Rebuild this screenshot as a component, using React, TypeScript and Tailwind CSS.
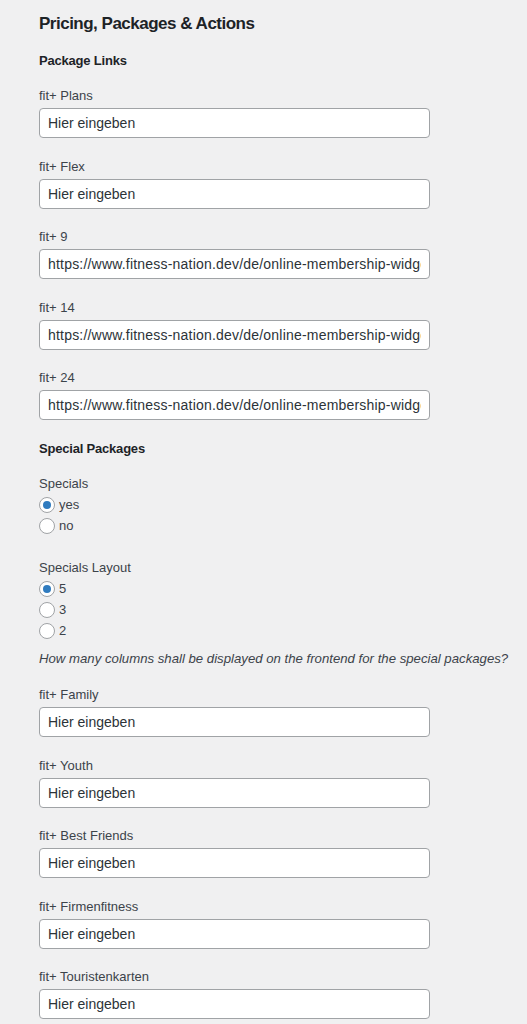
import React from "react";

const URL = "https://www.fitness-nation.dev/de/online-membership-widget";

function Field({ label, value }: { label: string; value?: string }) {
  return (
    <div className="flex flex-col">
      <div className="h-[18px] text-[13px] leading-[18px] text-[#3c434a]">{label}</div>
      <div className="mt-[3px] flex h-[30px] w-[391px] items-center overflow-hidden rounded-[4px] border border-[#a0a3a6] bg-white px-[8px]">
        <span className="block w-full overflow-hidden whitespace-nowrap text-[14px] leading-[18px] text-[#2c3338]">
          {value ? <span className="tracking-[0.2px]">{value}</span> : "Hier eingeben"}
        </span>
      </div>
    </div>
  );
}

function Radio({ label, checked }: { label: string; checked?: boolean }) {
  return (
    <div className="flex h-[21px] items-center">
      <span className="flex h-[16px] w-[16px] items-center justify-center rounded-full border border-[#a0a3a6] bg-white">
        {checked && <span className="h-[8px] w-[8px] rounded-full bg-[#2f7bbf]" />}
      </span>
      <span className="ml-[4px] text-[13px] leading-[18px] text-[#3c434a]">{label}</span>
    </div>
  );
}

export default function App() {
  return (
    <div
      className="min-h-[1024px] w-[527px] bg-[#f0f0f1] pl-[39px] pt-[12px]"
      style={{ fontFamily: '"Liberation Sans", Arial, sans-serif' }}
    >
      <h2 className="h-[24px] text-[17px] font-bold leading-[24px] tracking-[-0.5px] text-[#1d2327]">
        Pricing, Packages &amp; Actions
      </h2>
      <h3 className="mt-[16px] h-[18px] text-[13px] font-bold leading-[18px] tracking-[-0.2px] text-[#1d2327]">
        Package Links
      </h3>
      <div className="mt-[17px] flex flex-col gap-[19.5px]">
        <Field label="fit+ Plans" />
        <Field label="fit+ Flex" />
        <Field label="fit+ 9" value={URL} />
        <Field label="fit+ 14" value={URL} />
        <Field label="fit+ 24" value={URL} />
      </div>
      <h3 className="mt-[19.5px] h-[18px] text-[13px] font-bold leading-[18px] tracking-[-0.2px] text-[#1d2327]">
        Special Packages
      </h3>
      <div className="mt-[17px] h-[18px] text-[13px] leading-[18px] text-[#3c434a]">Specials</div>
      <div className="mt-[2px] flex flex-col">
        <Radio label="yes" checked />
        <Radio label="no" />
      </div>
      <div className="mt-[22.5px] h-[18px] text-[13px] leading-[18px] text-[#3c434a]">Specials Layout</div>
      <div className="mt-[1.5px] flex flex-col">
        <Radio label="5" checked />
        <Radio label="3" />
        <Radio label="2" />
      </div>
      <p className="mt-[8.5px] h-[18px] whitespace-nowrap text-[13.2px] italic leading-[18px] text-[#3c434a]">
        How many columns shall be displayed on the frontend for the special packages?
      </p>
      <div className="mt-[18px] flex flex-col gap-[19.5px]">
        <Field label="fit+ Family" />
        <Field label="fit+ Youth" />
        <Field label="fit+ Best Friends" />
        <Field label="fit+ Firmenfitness" />
        <Field label="fit+ Touristenkarten" />
      </div>
    </div>
  );
}
